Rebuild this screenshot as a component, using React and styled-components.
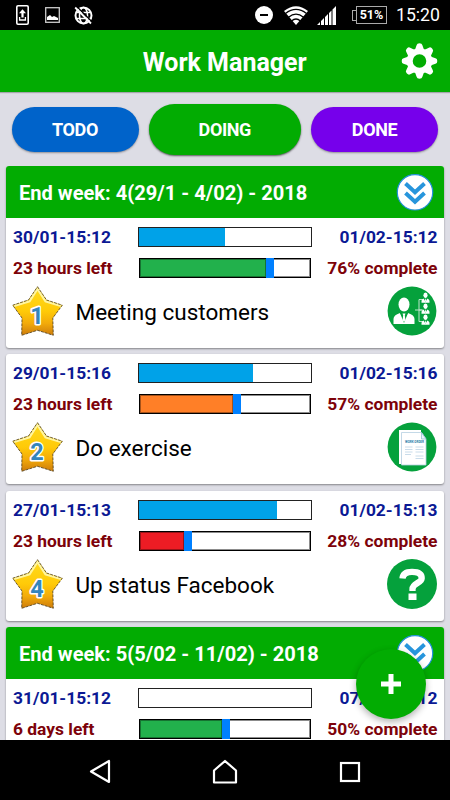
import React from "react";
import styled, { createGlobalStyle } from "styled-components";

const GlobalStyle = createGlobalStyle`
  * {
    box-sizing: border-box;
  }
  body {
    margin: 0;
    background: #dddde5;
    font-family: Roboto, sans-serif;
  }
`;
const SCPhone = styled.div`
  position: relative;
  display: flex;
  flex-direction: column;
  width: 450px;
  height: 800px;
  overflow: hidden;
`;
const SCStatusBar = styled.div`
  display: flex;
  justify-content: space-between;
  align-items: center;
  height: 30px;
  padding: 0 10px 0 16px;
  background: #000;
  color: #fff;
`;
const SCStatusGroup = styled.div`
  display: flex;
  align-items: center;
  gap: ${(props) => props.$gap}px;
`;
const SCBattery = styled.div`
  position: relative;
  width: 31px;
  height: 18px;
  margin: 0 0 0 11px;
  border: 1.5px solid #aaa;
  font-size: 12.5px;
  font-weight: 700;
  line-height: 16px;
  text-align: center;
  &::before {
    content: "";
    position: absolute;
    left: -5px;
    top: 3px;
    width: 4px;
    height: 9px;
    border: 1.5px solid #aaa;
    border-right: 0;
  }
`;
const SCClock = styled.span`
  font-size: 17.7px;
  line-height: 32px;
`;
const SCHeader = styled.header`
  display: grid;
  grid-template-columns: 1fr auto 1fr;
  align-items: center;
  flex: none;
  height: 62px;
  padding: 0 12.5px 0 12px;
  background: #02ac02;
  box-shadow: 0 1px 1px rgba(0, 0, 0, 0.25);
  color: #fff;
  svg {
    justify-self: end;
  }
`;
const SCTitle = styled.h1`
  grid-column: 2;
  margin: 4px 0 0;
  font-size: 25px;
  font-weight: 700;
  line-height: 30px;
`;
const SCTabs = styled.nav`
  display: flex;
  justify-content: space-between;
  align-items: center;
  flex: none;
  height: 74px;
  padding: 0 12px 0 11.5px;
`;
const SCTab = styled.button`
  width: ${(props) => (props.$active ? 152 : 127)}px;
  height: ${(props) => (props.$active ? 51 : 45)}px;
  padding: 0;
  border: 0;
  border-radius: 26px;
  background: ${(props) => props.$color};
  box-shadow: 0 1px 2px rgba(0, 0, 0, ${(props) => (props.$active ? 0.6 : 0.35)});
  color: #fff;
  font-family: inherit;
  font-size: 18px;
  font-weight: 700;
  letter-spacing: -0.4px;
`;
const SCList = styled.main`
  display: flex;
  flex-direction: column;
  flex: 1;
  min-height: 0;
  gap: 6.3px;
  padding: 0 6.5px 0 6px;
  overflow: hidden;
`;
const SCCard = styled.section`
  flex: none;
  border-radius: 3px;
  background: #fff;
  box-shadow: 0 1px 2px rgba(0, 0, 0, 0.4);
  overflow: hidden;
`;
const SCWeek = styled.div`
  display: flex;
  justify-content: space-between;
  align-items: center;
  height: 52px;
  padding: 0 10px 0 13px;
  background: #02ac02;
  color: #fff;
  font-size: 20.1px;
  font-weight: 700;
`;
const SCWeekName = styled.span`
  padding-top: 2px;
`;
const SCTask = styled.div`
  height: 130px;
  padding: 9px 6px 0 7px;
`;
const SCLine = styled.div`
  display: flex;
  align-items: center;
  height: 20px;
  margin-bottom: ${(props) => props.$after}px;
  color: ${(props) => props.$color};
  font-size: 17.4px;
  font-weight: 700;
  white-space: nowrap;
`;
const SCLeft = styled.span`
  width: 125px;
`;
const SCRight = styled.span`
  flex: 1;
  text-align: right;
`;
const SCTimeBar = styled.div`
  width: 174px;
  height: 20px;
  border: 1px solid #222;
  background: #fff;
`;
const SCTimeFill = styled.div`
  height: 100%;
  background: #00a2e8;
`;
const SCProgress = styled.div`
  display: flex;
  width: 172px;
  height: 20px;
  margin: 0 1px;
  border: 1px solid #000;
  box-shadow: inset 0 0 0 1px rgba(0, 0, 0, 0.45);
`;
const SCProgressFill = styled.div`
  border: 1px solid rgba(0, 0, 0, 0.35);
  background: ${(props) => props.$color};
`;
const SCThumb = styled.div`
  width: 8px;
  margin: -1px 0;
  background: #0080ff;
`;
const SCBottom = styled.div`
  display: flex;
  align-items: center;
  height: 50px;
  margin: 0 0.5px 0 -1px;
`;
const SCName = styled.span`
  flex: 1;
  margin-left: 12.5px;
  padding-top: 2px;
  color: #000;
  font-size: 22.5px;
`;
const SCFab = styled.button`
  position: absolute;
  left: 355.5px;
  top: 648.5px;
  display: flex;
  justify-content: center;
  align-items: center;
  width: 70px;
  height: 70px;
  padding: 0;
  border: 0;
  border-radius: 50%;
  background: #02ac02;
  box-shadow: 0 3px 7px rgba(0, 0, 0, 0.3);
`;
const SCNavBar = styled.footer`
  display: flex;
  justify-content: center;
  align-items: center;
  gap: 101px;
  flex: none;
  height: 60px;
  padding-top: 3px;
  background: #000;
`;

const tasks = [
  {
    start: "30/01-15:12",
    end: "01/02-15:12",
    left: "23 hours left",
    done: 76,
    time: 50,
    fill: 126,
    color: "#22b14c",
    rank: 1,
    name: "Meeting customers",
    icon: "meeting",
  },
  {
    start: "29/01-15:16",
    end: "01/02-15:16",
    left: "23 hours left",
    done: 57,
    time: 66.5,
    fill: 93,
    color: "#ff7f27",
    rank: 2,
    name: "Do exercise",
    icon: "work",
  },
  {
    start: "27/01-15:13",
    end: "01/02-15:13",
    left: "23 hours left",
    done: 28,
    time: 80.5,
    fill: 43.5,
    color: "#ed1c24",
    rank: 4,
    name: "Up status Facebook",
    icon: "question",
  },
  {
    start: "31/01-15:12",
    end: "07/02-15:12",
    left: "6 days left",
    done: 50,
    time: 0,
    fill: 81.5,
    color: "#22b14c",
  },
];

function PhoneIcon() {
  return (
    <svg width="13" height="20" viewBox="0 0 13 20">
      <rect x="0.8" y="0.8" width="11.4" height="18.4" rx="1.2" fill="none" stroke="#fff" strokeWidth="1.6" />
      <path d="M6.5 4.2 10 8.2H7.6V12.5H5.4V8.2H3Z" fill="#fff" />
      <path d="M3.6 12v3h5.8v-3" fill="none" stroke="#fff" strokeWidth="1.3" />
    </svg>
  );
}

function PictureIcon() {
  return (
    <svg width="16" height="16" viewBox="0 0 16 16">
      <rect x="1.7" y="0.7" width="13.6" height="14.6" fill="none" stroke="#ccc" strokeWidth="1.3" />
      <path d="M3 13V10l3-2 2 2 2-1 4 2v2Z" fill="#fff" />
    </svg>
  );
}

function GlobeIcon() {
  return (
    <svg width="19" height="19" viewBox="0 0 19 19">
      <circle cx="9.5" cy="9.5" r="8" fill="none" stroke="#fff" strokeWidth="2" />
      <ellipse cx="9.5" cy="9.5" rx="4" ry="8" fill="none" stroke="#fff" strokeWidth="1.6" />
      <path d="M2 6.5h15M2 12.5h15" stroke="#fff" strokeWidth="1.6" />
      <path d="M3 .8 18.2 16" stroke="#000" strokeWidth="1.3" />
      <path d="M1.2 1.5 17 17.5" stroke="#fff" strokeWidth="1.8" />
    </svg>
  );
}

function SilentIcon() {
  return (
    <svg width="18" height="18" viewBox="0 0 18 18">
      <circle cx="9" cy="9" r="9" fill="#fff" />
      <path d="M5 9h8" stroke="#000" strokeWidth="2" />
    </svg>
  );
}

function WifiIcon() {
  return (
    <svg width="26" height="20" viewBox="-2 -1 26 20">
      <path d="M0 5Q12-4.5 24 5L12 19Z" fill="#fff" />
      <path
        d="M1.5 7.4Q12-.5 22.5 7.4M4.5 11.2Q12 5.2 19.5 11.2M7.5 15Q12 11 16.5 15"
        fill="none"
        stroke="#000"
        strokeWidth="1.3"
      />
    </svg>
  );
}

function SignalIcon() {
  return (
    <svg width="19" height="19" viewBox="0 0 19 19">
      <path d="M0 19 3 16V19ZM4 19V15L7 12V19ZM8 19V11L11 8V19ZM12 19V7L14.5 4.5V19ZM15.500 19V3.500L19 0V19Z" fill="#fff" />
    </svg>
  );
}

function GearIcon() {
  return (
    <svg width="37" height="36" viewBox="-18.5 -18 37 36">
      {[0, 45, 90, 135, 180, 225, 270, 315].map((angle) => (
        <path
          key={angle}
          d="M-4.6 -11 L-2.8 -16 Q-2.5 -17.8 0 -17.8 Q2.5 -17.8 2.8 -16 L4.6 -11Z"
          fill="#fff"
          transform={`rotate(${angle})`}
        />
      ))}
      <circle r="9.8" fill="none" stroke="#fff" strokeWidth="6" />
    </svg>
  );
}

function ChevronsIcon() {
  return (
    <svg width="38" height="38" viewBox="0 0 38 38">
      <circle cx="19" cy="19.300" r="17.7" fill="#fff" stroke="#2490da" strokeWidth="1.2" />
      <path d="M9.5 10.500 19 19.300 28.500 10.500M9.500 20 19 28.800 28.500 20" fill="none" stroke="#2795dc" strokeWidth="4" />
    </svg>
  );
}

function Star({ rank }) {
  const id = "star" + rank;
  const points =
    "25.5,.7 34.5,14 50.3,19.2 40.8,32 41.3,49.3 25.5,44.3 9.7,49.3 10,32 .7,19.2 16.5,14";
  return (
    <svg width="51" height="50" viewBox="0 0 51 50">
      <defs>
        <linearGradient id={id} x1="0" y1="0" x2="0" y2="1">
          <stop offset="0" stopColor="#ffdc1e" />
          <stop offset="0.5" stopColor="#ffca08" />
          <stop offset="0.75" stopColor="#f3ab0a" />
          <stop offset="1" stopColor="#cd7c0c" />
        </linearGradient>
      </defs>
      <polygon points={points} fill={`url(#${id})`} />
      <path d="M2 20 17.5 15.3 25.5 3 33.5 15.3 49 20" fill="none" stroke="#fff5a0" strokeWidth="2.2" />
      <polygon points={points} fill="none" stroke="#4a3a18" strokeWidth="0.8" strokeDasharray="3 1" />
      <text
        x="25"
        y="37.5"
        textAnchor="middle"
        fontFamily="Roboto, sans-serif"
        fontSize="23.5"
        fontWeight="700"
        fill="#3485bd"
        stroke="#fff"
        strokeWidth="3"
        strokeLinejoin="round"
        paintOrder="stroke"
      >
        {rank}
      </text>
    </svg>
  );
}

function Person({ x, y, size }) {
  return (
    <g transform={`translate(${x} ${y}) scale(${size})`}>
      <ellipse cx="0" cy="-8.5" rx="5.5" ry="7" fill="#fff" />
      <path d="M-10.5 11V6Q-10.5 2 -4 0L0 7 4 0Q10.5 2 10.5 6V11Z" fill="#fff" />
      <path d="M-4 0 0 10 4 0 2 -.5H-2Z" fill="#05a13c" />
      <path d="M-1.5 .5H1.5L.8 2.5 1.5 7 0 9-1.500 7-.8 2.500Z" fill="#fff" />
    </g>
  );
}

function TypeIcon({ type }) {
  return (
    <svg width="50" height="50" viewBox="0 0 50 50">
      <circle cx="25" cy="25" r={type === "question" ? 25 : 24.4} fill="#05a13c" />
      {type === "meeting" && (
        <>
          <Person x={17} y={27} size={1} />
          <path d="M28 24h7M36 13.5h-4v22h4M32 24h4" fill="none" stroke="#bfe5cc" strokeWidth="1" />
          <Person x={38.5} y={12.5} size={0.38} />
          <Person x={38.5} y={23.5} size={0.38} />
          <Person x={38.5} y={34.5} size={0.38} />
        </>
      )}
      {type === "work" && (
        <>
          <path d="M12 8h22v34H12Z" fill="#fff" />
          <path d="M14.5 10.5h20L39 17v26H14.5Z" fill="#fff" stroke="#b5cfe1" strokeWidth="0.8" />
          <path d="M34.5 10.5V17H39Z" fill="#eaf5fb" stroke="#8db8d3" strokeWidth="0.7" />
          <text
            x="27.5"
            y="21"
            textAnchor="middle"
            textLength="19"
            lengthAdjust="spacingAndGlyphs"
            fontFamily="Roboto, sans-serif"
            fontSize="3.6"
            fontWeight="700"
            fill="#2a7aa8"
          >
            WORK ORDER
          </text>
          <path
            d="M18 25h7.5M18 27.5h7.5M18 30h7.5M18 32.5h6M28.5 25h8M28.5 27.5h8M28.5 30h8M28.5 34h8M28.5 36.5h8"
            stroke="#c3d8e8"
            strokeWidth="0.9"
          />
        </>
      )}
      {type === "question" && (
        <>
          <path
            d="M15.5 19.5Q16 12.8 25 12.8 34.7 12.8 34.7 19.2C34.7 24 25.5 24 25.5 30V32"
            fill="none"
            stroke="#fff"
            strokeWidth="6.3"
          />
          <rect x="21.5" y="34.5" width="8" height="6.5" fill="#fff" />
        </>
      )}
    </svg>
  );
}

function Task({ task }) {
  return (
    <SCTask>
      <SCLine $color="#0b1994" $after={11}>
        <SCLeft>{task.start}</SCLeft>
        <SCTimeBar>
          <SCTimeFill style={{ width: `${task.time}%` }} />
        </SCTimeBar>
        <SCRight>{task.end}</SCRight>
      </SCLine>
      <SCLine $color="#7d0209" $after={8}>
        <SCLeft>{task.left}</SCLeft>
        <SCProgress>
          <SCProgressFill $color={task.color} style={{ width: task.fill }} />
          <SCThumb />
        </SCProgress>
        <SCRight>{task.done}% complete</SCRight>
      </SCLine>
      {task.name && (
        <SCBottom>
          <Star rank={task.rank} />
          <SCName>{task.name}</SCName>
          <TypeIcon type={task.icon} />
        </SCBottom>
      )}
    </SCTask>
  );
}

export default function App() {
  return (
    <>
      <GlobalStyle />
      <SCPhone>
        <SCStatusBar>
          <SCStatusGroup $gap={14.5}>
            <PhoneIcon />
            <PictureIcon />
            <GlobeIcon />
          </SCStatusGroup>
          <SCStatusGroup $gap={9}>
            <SilentIcon />
            <WifiIcon />
            <SignalIcon />
            <SCBattery>51%</SCBattery>
            <SCClock>15:20</SCClock>
          </SCStatusGroup>
        </SCStatusBar>
        <SCHeader>
          <SCTitle>Work Manager</SCTitle>
          <GearIcon />
        </SCHeader>
        <SCTabs>
          <SCTab $color="#0063ca">TODO</SCTab>
          <SCTab $color="#02ac02" $active>
            DOING
          </SCTab>
          <SCTab $color="#7600eb">DONE</SCTab>
        </SCTabs>
        <SCList>
          <SCCard>
            <SCWeek>
              <SCWeekName>End week: 4(29/1 - 4/02) - 2018</SCWeekName>
              <ChevronsIcon />
            </SCWeek>
            <Task task={tasks[0]} />
          </SCCard>
          <SCCard>
            <Task task={tasks[1]} />
          </SCCard>
          <SCCard>
            <Task task={tasks[2]} />
          </SCCard>
          <SCCard>
            <SCWeek>
              <SCWeekName>End week: 5(5/02 - 11/02) - 2018</SCWeekName>
              <ChevronsIcon />
            </SCWeek>
            <Task task={tasks[3]} />
          </SCCard>
        </SCList>
        <SCNavBar>
          <svg width="22" height="26" viewBox="0 0 22 26">
            <path d="M2 12.5 20 2V23Z" fill="none" stroke="#fff" strokeWidth="2.2" strokeLinejoin="round" />
          </svg>
          <svg width="26" height="26" viewBox="0 0 26 26">
            <path d="M2 11.5 13 2 24 11.5V23.5H2Z" fill="none" stroke="#fff" strokeWidth="2.2" strokeLinejoin="round" />
          </svg>
          <svg width="22" height="22" viewBox="0 0 22 22">
            <rect x="2" y="2" width="18" height="18" fill="none" stroke="#fff" strokeWidth="2.2" />
          </svg>
        </SCNavBar>
        <SCFab aria-label="Add">
          <svg width="20" height="20" viewBox="0 0 20 20">
            <path d="M10 0v20M0 10h20" stroke="#fff" strokeWidth="5" />
          </svg>
        </SCFab>
      </SCPhone>
    </>
  );
}
